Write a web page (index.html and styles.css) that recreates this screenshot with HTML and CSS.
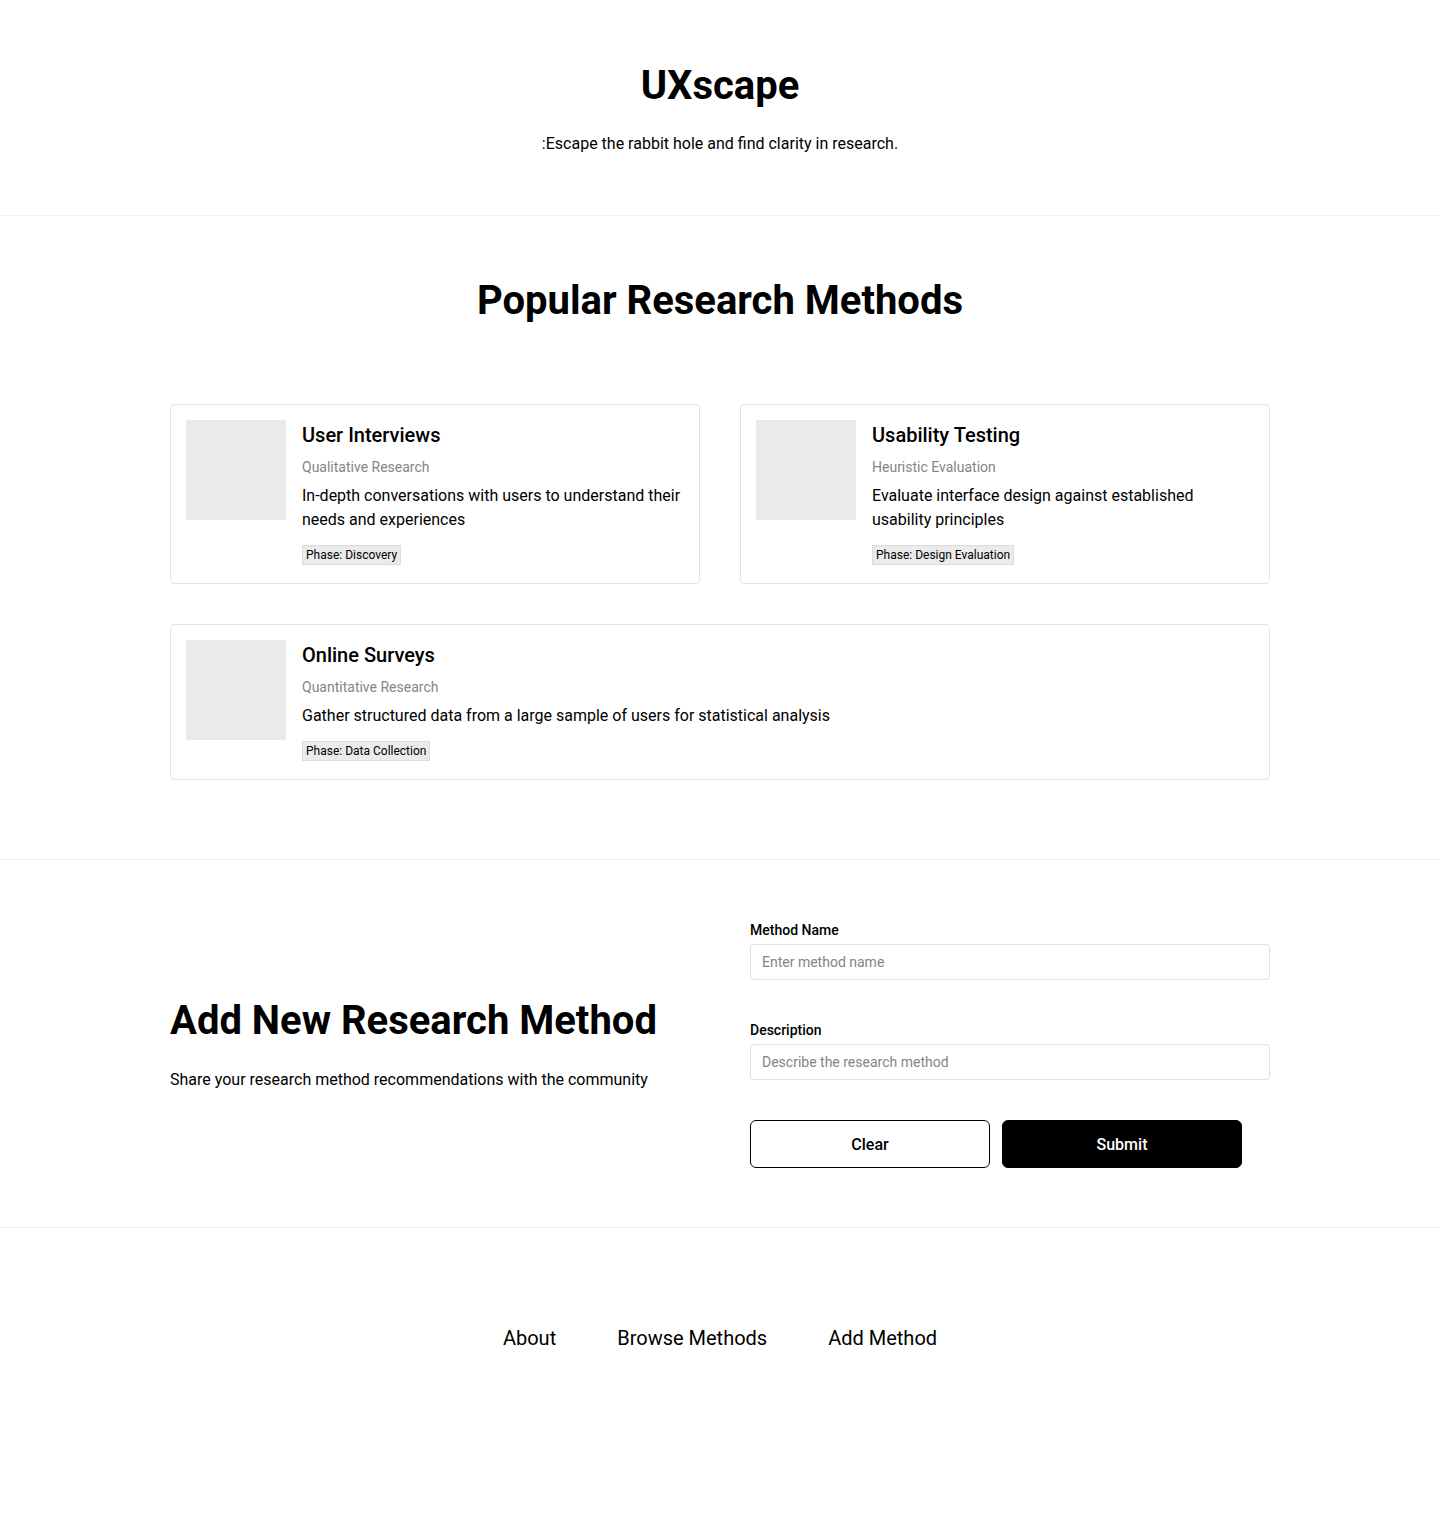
FILE: index.html
```html
<!DOCTYPE html>
<html>
<head>
  <meta charset="UTF-8">
  <title>UXscape</title>
  <link rel="stylesheet" href="styles.css">
</head>
<body>

  <header class="header">
    <h1 class="header-title">UXscape</h1>
    <p class="header-tagline">:Escape the rabbit hole and find clarity in research.</p>
  </header>

  <section class="methods">
    <h2 class="section-title">Popular Research Methods</h2>
    <div class="method-grid">
      <div class="method-card">
        <div class="method-thumb"></div>
        <div class="method-body">
          <h3 class="method-name">User Interviews</h3>
          <p class="method-type">Qualitative Research</p>
          <p class="method-desc">In-depth conversations with users to understand their needs and experiences</p>
          <span class="method-tag">Phase: Discovery</span>
        </div>
      </div>
      <div class="method-card">
        <div class="method-thumb"></div>
        <div class="method-body">
          <h3 class="method-name">Usability Testing</h3>
          <p class="method-type">Heuristic Evaluation</p>
          <p class="method-desc">Evaluate interface design against established usability principles</p>
          <span class="method-tag">Phase: Design Evaluation</span>
        </div>
      </div>
      <div class="method-card wide">
        <div class="method-thumb"></div>
        <div class="method-body">
          <h3 class="method-name">Online Surveys</h3>
          <p class="method-type">Quantitative Research</p>
          <p class="method-desc">Gather structured data from a large sample of users for statistical analysis</p>
          <span class="method-tag">Phase: Data Collection</span>
        </div>
      </div>
    </div>
  </section>

  <section class="add-method">
    <div class="add-intro">
      <h2 class="add-title">Add New Research Method</h2>
      <p class="add-text">Share your research method recommendations with the community</p>
    </div>
    <form class="add-form" onsubmit="event.preventDefault()">
      <label for="method-name">Method Name</label>
      <input type="text" id="method-name" placeholder="Enter method name">
      <label for="method-desc">Description</label>
      <input type="text" id="method-desc" placeholder="Describe the research method">
      <div class="form-buttons">
        <button type="reset" class="btn btn-clear">Clear</button>
        <button type="submit" class="btn btn-submit">Submit</button>
      </div>
    </form>
  </section>

  <footer class="footer">
    <nav class="footer-nav">
      <a href="#">About</a>
      <a href="#">Browse Methods</a>
      <a href="#">Add Method</a>
    </nav>
  </footer>

</body>
</html>
```

FILE: styles.css
```css
* {
  box-sizing: border-box;
}

body {
  margin: 0;
  font-family: Roboto, "Liberation Sans", sans-serif;
  color: #000;
  background: #fff;
}

h1, h2, h3, p {
  margin: 0;
}

.header {
  padding: 62px 0 59px;
  text-align: center;
  border-bottom: 1px solid #f0f0f0;
}

.header-title {
  font-size: 40px;
  line-height: 48px;
  font-weight: 700;
  margin-bottom: 22px;
}

.header-tagline {
  font-size: 16px;
  line-height: 24px;
}

.methods {
  padding: 61px 170px 79px;
  border-bottom: 1px solid #f0f0f0;
}

.section-title {
  font-size: 40px;
  line-height: 48px;
  font-weight: 700;
  text-align: center;
  margin-bottom: 79px;
}

.method-grid {
  display: grid;
  grid-template-columns: 1fr 1fr;
  gap: 40px;
}

.method-card {
  display: flex;
  gap: 16px;
  padding: 15px;
  border: 1px solid #e3e3e3;
  border-radius: 4px;
}

.method-card.wide {
  grid-column: 1 / 3;
}

.method-thumb {
  flex: 0 0 100px;
  height: 100px;
  background: #ebebeb;
}

.method-body {
  display: flex;
  flex-direction: column;
  align-items: flex-start;
  padding-top: 1px;
}

.method-name {
  font-size: 20px;
  line-height: 28px;
  font-weight: 500;
}

.method-type {
  margin-top: 8px;
  font-size: 14px;
  line-height: 20px;
  color: #858585;
}

.method-desc {
  margin-top: 7px;
  font-size: 16px;
  line-height: 24px;
}

.method-tag {
  margin-top: 13px;
  margin-bottom: 3px;
  padding: 1px 3px;
  font-size: 12px;
  line-height: 16px;
  background: #ebebeb;
  border: 1px solid #dcdcdc;
}

.add-method {
  display: grid;
  grid-template-columns: 1fr 520px;
  gap: 60px;
  align-items: center;
  padding: 60px 170px 59px;
  border-bottom: 1px solid #f0f0f0;
}

.add-title {
  font-size: 40px;
  line-height: 48px;
  font-weight: 700;
  margin-bottom: 23px;
}

.add-text {
  font-size: 16px;
  line-height: 24px;
}

.add-form {
  display: flex;
  flex-direction: column;
}

.add-form label {
  font-size: 14px;
  line-height: 20px;
  font-weight: 500;
  margin-bottom: 4px;
}

.add-form input {
  height: 36px;
  padding: 0 11px;
  font-family: inherit;
  font-size: 14px;
  border: 1px solid #e0e0e0;
  border-radius: 4px;
  margin-bottom: 40px;
}

.add-form input::placeholder {
  color: #858585;
}

.form-buttons {
  display: flex;
  gap: 12px;
}

.btn {
  width: 240px;
  height: 48px;
  font-family: inherit;
  font-size: 16px;
  font-weight: 500;
  border-radius: 6px;
  cursor: pointer;
}

.btn-clear {
  background: #fff;
  color: #000;
  border: 1px solid #000;
}

.btn-submit {
  background: #000;
  color: #fff;
  border: 1px solid #000;
}

.footer {
  padding: 96px 0 176px;
}

.footer-nav {
  display: flex;
  justify-content: center;
  gap: 61px;
}

.footer-nav a {
  font-size: 20px;
  line-height: 28px;
  color: #000;
  text-decoration: none;
}
```
